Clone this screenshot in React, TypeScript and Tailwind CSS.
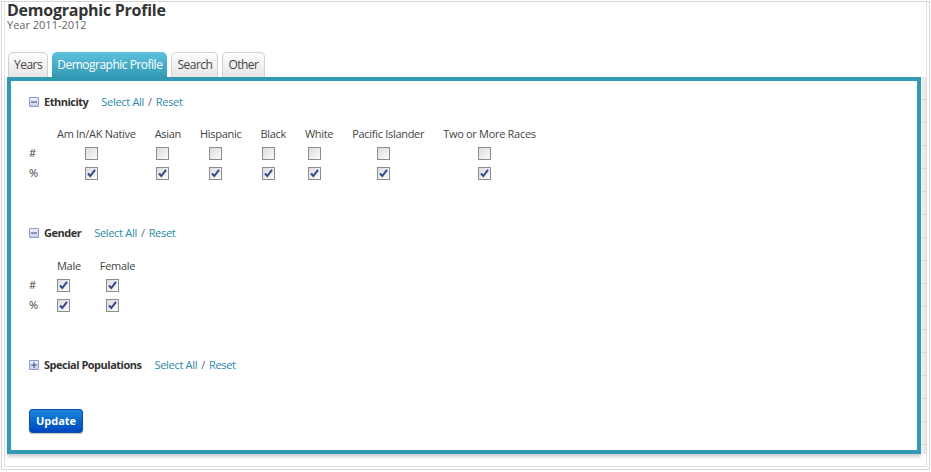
import React from 'react'

const ethnicity = [
  'Am In/AK Native',
  'Asian',
  'Hispanic',
  'Black',
  'White',
  'Pacific Islander',
  'Two or More Races',
]

function Box({ checked }: { checked: boolean }) {
  return (
    <span className="flex h-[13px] w-[13px] items-center justify-center border border-[#8c8c8c] bg-gradient-to-br from-[#dcdcdc] to-[#fbfbfb]">
      {checked && (
        <svg width="9" height="9" viewBox="0 0 9 9">
          <path d="M1 4.5 L3.3 7 L8 0.8" fill="none" stroke="#34478a" strokeWidth="2" />
        </svg>
      )}
    </span>
  )
}

function Toggle({ open }: { open: boolean }) {
  return (
    <span className="flex h-[10px] w-[10px] items-center justify-center rounded-[1px] border border-[#8a96cc] bg-gradient-to-b from-[#eef0fb] to-[#c9cfee]">
      <svg width="6" height="6" viewBox="0 0 6 6">
        <path d="M0 3 H6" stroke="#3d4a7a" strokeWidth="1" />
        {!open && <path d="M3 0 V6" stroke="#3d4a7a" strokeWidth="1" />}
      </svg>
    </span>
  )
}

function SectionHead({ title, open }: { title: string; open: boolean }) {
  return (
    <div className="flex h-4 items-center text-[11px] tracking-[-0.3px]">
      <Toggle open={open} />
      <span className="ml-[5px] font-bold tracking-[-0.5px] text-[#333]">{title}</span>
      <span className="ml-[13px] text-[#2b88ab]">Select All</span>
      <span className="mx-[4px] text-[#666]">/</span>
      <span className="text-[#2b88ab]">Reset</span>
    </div>
  )
}

function Grid({ cols, hash, top }: { cols: string[]; hash: boolean[]; top: string }) {
  return (
    <div className={`${top} flex text-[11px] tracking-[-0.3px] text-[#444]`}>
      <div className="w-[28px] pt-[18px]">
        <div className="flex h-5 items-center">#</div>
        <div className="flex h-5 items-center">%</div>
      </div>
      <div className="flex gap-x-[19px]">
        {cols.map((c, i) => (
          <div key={c} className="flex flex-col">
            <div className="flex h-[18px] items-center justify-center whitespace-nowrap">{c}</div>
            <div className="flex h-5 items-center justify-center pr-[10px]">
              <Box checked={hash[i]} />
            </div>
            <div className="flex h-5 items-center justify-center pr-[10px]">
              <Box checked />
            </div>
          </div>
        ))}
      </div>
    </div>
  )
}

export default function App() {
  return (
    <div className="h-[472px] w-[931px] bg-white p-px" style={{ fontFamily: '"Open Sans", "Liberation Sans", sans-serif' }}>
      <div className="h-[469px] border border-[#d6d6d6] px-[2px] pb-[2px]">
        <div className="h-full border-l border-r border-b border-[#e2e2e2] pl-[2px]">
          <div className="text-[16px] font-bold leading-[17px] tracking-[-0.25px] text-[#333]">Demographic Profile</div>
          <div className="text-[11px] leading-[11px] text-[#666]">Year 2011-2012</div>

          <div className="mt-[22px] flex items-end gap-[4px] pl-[1px] text-[12px] tracking-[-0.5px]">
            <div className="flex h-[25px] items-center rounded-t-[5px] border border-b-0 border-[#d2d2d2] bg-gradient-to-b from-[#fdfdfd] to-[#e6e6e6] px-[5px] text-[#444]">Years</div>
            <div className="flex h-[25px] items-center rounded-t-[5px] bg-gradient-to-b from-[#5ec2de] to-[#3399b3] px-[5px] text-white">Demographic Profile</div>
            <div className="flex h-[25px] items-center rounded-t-[5px] border border-b-0 border-[#d2d2d2] bg-gradient-to-b from-[#fdfdfd] to-[#e6e6e6] px-[5px] text-[#444]">Search</div>
            <div className="flex h-[25px] items-center rounded-t-[5px] border border-b-0 border-[#d2d2d2] bg-gradient-to-b from-[#fdfdfd] to-[#e6e6e6] px-[5px] text-[#444]">Other</div>
          </div>

          <div className="flex">
            <div className="h-[377px] w-[914px] shrink-0 border-4 border-[#3199b3] bg-white px-[18px] pt-[13px] shadow-[0_3px_3px_rgba(0,0,0,0.18)]">
              <SectionHead title="Ethnicity" open />
              <Grid cols={ethnicity} hash={ethnicity.map(() => false)} top="mt-[15px]" />

              <div className="mt-[42px]">
                <SectionHead title="Gender" open />
              </div>
              <Grid cols={['Male', 'Female']} hash={[true, true]} top="mt-[16px]" />

              <div className="mt-[42px]">
                <SectionHead title="Special Populations" open={false} />
              </div>

              <button className="mt-[36px] flex h-[24px] w-[54px] items-center justify-center rounded-[3px] border border-[#0b50b0] bg-gradient-to-b from-[#1c86dc] to-[#0046be] text-[11px] font-bold text-white shadow-[0_1px_1px_rgba(0,0,0,0.25)]">
                Update
              </button>
            </div>
            <div className="flex-1 bg-gradient-to-r from-[#f2f2f2] to-[#e4e4e4]">
              {Array.from({ length: 16 }).map((_, i) => (
                <div key={i} className="h-[23px] border-b border-[#d8d8d8]" />
              ))}
            </div>
          </div>
        </div>
      </div>
    </div>
  )
}
